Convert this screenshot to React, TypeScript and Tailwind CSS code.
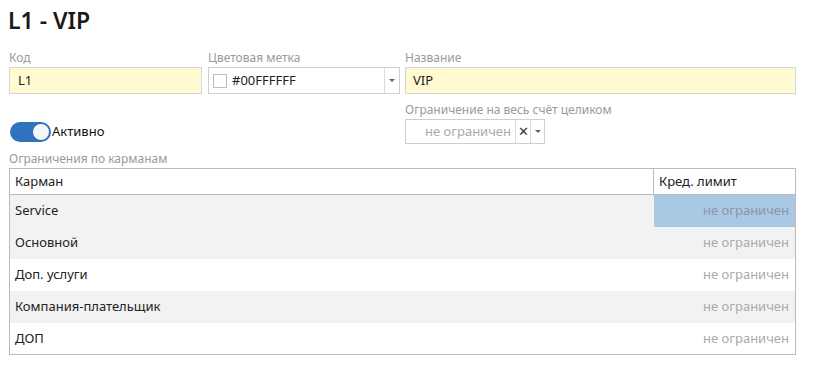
import React from "react";

const rows = [
  { name: "Service", grey: true, selected: true },
  { name: "Основной", grey: true },
  { name: "Доп. услуги", grey: false },
  { name: "Компания-плательщик", grey: true },
  { name: "ДОП", grey: false },
];

const Label = ({ children }: { children: React.ReactNode }) => (
  <div className="text-[12px] leading-[16px] text-[#9a9a9a] h-[16px] mb-[1px]">{children}</div>
);

const Caret = () => (
  <div className="w-0 h-0 border-l-[3px] border-r-[3px] border-t-[3px] border-l-transparent border-r-transparent border-t-[#666]" />
);

export default function App() {
  return (
    <div
      className="w-[825px] h-[389px] bg-white text-[#222] px-[9px] pt-[5px]"
      style={{ fontFamily: '"Noto Sans", "Open Sans", sans-serif' }}
    >
      <h1 className="text-[23px] font-semibold leading-[30px] text-[#1a1a1a] -ml-[1px]">L1 - VIP</h1>

      <div className="flex mt-[15px] w-[787px]">
        <div className="w-[193px]">
          <Label>Код</Label>
          <div className="h-[27px] border border-[#d6d6d6] bg-[#fffad2] flex items-center px-[8px] text-[13px]">L1</div>
        </div>
        <div className="w-[192px] ml-[6px]">
          <Label>Цветовая метка</Label>
          <div className="h-[27px] border border-[#cfcfcf] bg-white flex items-center text-[13px]">
            <div className="w-[14px] h-[14px] border border-[#bdbdbd] ml-[4px] mr-[5px]" />
            <span className="flex-1">#00FFFFFF</span>
            <div className="w-[15px] h-full border-l border-[#dcdcdc] flex items-center justify-center">
              <Caret />
            </div>
          </div>
        </div>
        <div className="flex-1 ml-[5px]">
          <Label>Название</Label>
          <div className="h-[27px] border border-[#d6d6d6] bg-[#fffad2] flex items-center px-[7px] text-[13px]">VIP</div>
        </div>
      </div>

      <div className="flex mt-[8px] w-[787px]">
        <div className="w-[396px] pt-[18px] flex items-center">
          <div className="w-[41px] h-[20px] rounded-full bg-[#2f73bd] relative ml-[1px]">
            <div className="absolute right-[2px] top-[2px] w-[16px] h-[16px] rounded-full bg-[#f4f7fb]" />
          </div>
          <span className="text-[13px] ml-[1px] text-[#111]">Активно</span>
        </div>
        <div>
          <Label>Ограничение на весь счёт целиком</Label>
          <div className="w-[140px] h-[25px] border border-[#cfcfcf] flex items-center text-[13px]">
            <span className="flex-1 text-right pr-[4px] text-[#aaa]">не ограничен</span>
            <div className="w-[15px] h-full border-l border-[#dcdcdc] flex items-center justify-center text-[13px] text-[#333]">✕</div>
            <div className="w-[14px] h-full border-l border-[#dcdcdc] flex items-center justify-center">
              <Caret />
            </div>
          </div>
        </div>
      </div>

      <div className="mt-[7px] w-[787px]">
        <Label>Ограничения по карманам</Label>
        <table className="w-full border border-[#bbb] border-collapse text-[13px]">
          <thead>
            <tr className="h-[26px]">
              <th className="text-left font-normal px-[5px] border border-[#bbb] text-[#222]">Карман</th>
              <th className="w-[142px] text-left font-normal px-[5px] border border-[#bbb] text-[#222]">Кред. лимит</th>
            </tr>
          </thead>
          <tbody>
            {rows.map((r) => (
              <tr key={r.name} className={`h-[32px] ${r.grey ? "bg-[#f2f2f2]" : "bg-white"}`}>
                <td className="px-[5px] text-[#222]">{r.name}</td>
                <td
                  className={`px-[6px] text-right ${r.selected ? "bg-[#a8c8e4] text-[#8797a8]" : "text-[#aaa]"}`}
                >
                  не ограничен
                </td>
              </tr>
            ))}
          </tbody>
        </table>
      </div>
    </div>
  );
}
